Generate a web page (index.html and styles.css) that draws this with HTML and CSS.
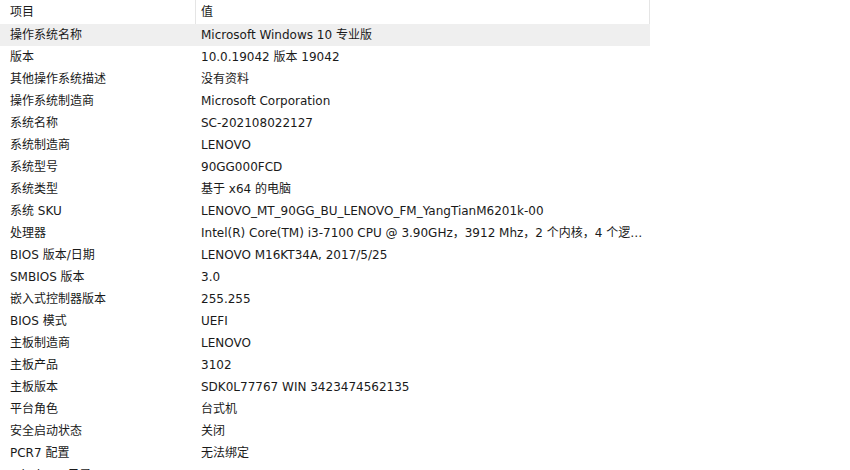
FILE: index.html
```html
<!DOCTYPE html>
<html lang="zh-CN">
<head>
	<meta charset="UTF-8">
	<title>系统摘要</title>
	<link rel="stylesheet" href="styles.css">
</head>
<body>
	<div class="list">
		<div class="row head">
			<div class="key">项目</div>
			<div class="val">值</div>
		</div>
		<div class="row selected">
			<div class="key">操作系统名称</div>
			<div class="val">Microsoft Windows 10 专业版</div>
		</div>
		<div class="row"><div class="key">版本</div><div class="val">10.0.19042 版本 19042</div></div>
		<div class="row"><div class="key">其他操作系统描述</div><div class="val">没有资料</div></div>
		<div class="row"><div class="key">操作系统制造商</div><div class="val">Microsoft Corporation</div></div>
		<div class="row"><div class="key">系统名称</div><div class="val">SC-202108022127</div></div>
		<div class="row"><div class="key">系统制造商</div><div class="val">LENOVO</div></div>
		<div class="row"><div class="key">系统型号</div><div class="val">90GG000FCD</div></div>
		<div class="row"><div class="key">系统类型</div><div class="val">基于 x64 的电脑</div></div>
		<div class="row"><div class="key">系统 SKU</div><div class="val">LENOVO_MT_90GG_BU_LENOVO_FM_YangTianM6201k-00</div></div>
		<div class="row"><div class="key">处理器</div><div class="val">Intel(R) Core(TM) i3-7100 CPU @ 3.90GHz，3912 Mhz，2 个内核，4 个逻辑处理器</div></div>
		<div class="row"><div class="key">BIOS 版本/日期</div><div class="val">LENOVO M16KT34A, 2017/5/25</div></div>
		<div class="row"><div class="key">SMBIOS 版本</div><div class="val">3.0</div></div>
		<div class="row"><div class="key">嵌入式控制器版本</div><div class="val">255.255</div></div>
		<div class="row"><div class="key">BIOS 模式</div><div class="val">UEFI</div></div>
		<div class="row"><div class="key">主板制造商</div><div class="val">LENOVO</div></div>
		<div class="row"><div class="key">主板产品</div><div class="val">3102</div></div>
		<div class="row"><div class="key">主板版本</div><div class="val">SDK0L77767 WIN 3423474562135</div></div>
		<div class="row"><div class="key">平台角色</div><div class="val">台式机</div></div>
		<div class="row"><div class="key">安全启动状态</div><div class="val">关闭</div></div>
		<div class="row"><div class="key">PCR7 配置</div><div class="val">无法绑定</div></div>
		<div class="row"><div class="key">Windows 目录</div><div class="val">C:\WINDOWS</div></div>
	</div>
</body>
</html>
```

FILE: styles.css
```css
html, body {
	margin: 0;
	height: 470px;
	overflow: hidden;
	background-color: #ffffff;
}

body {
	font-family: "DejaVu Sans", "Noto Sans CJK SC", sans-serif;
	font-size: 12px;
	color: #1a1a1a;
}

.list {
	width: 650px;
}

.row {
	display: grid;
	grid-template-columns: 195px 455px;
	height: 22px;
	line-height: 22px;
}

.head {
	height: 24px;
	line-height: 24px;
}

.head .val {
	border-left: 1px solid #e5e5e5;
	border-right: 1px solid #e5e5e5;
	padding-left: 5px;
}

.selected {
	background-color: #efefef;
}

.key {
	padding-left: 10px;
	white-space: nowrap;
	overflow: hidden;
}

.val {
	padding-left: 6px;
	padding-right: 4px;
	white-space: nowrap;
	overflow: hidden;
	text-overflow: ellipsis;
}
```
